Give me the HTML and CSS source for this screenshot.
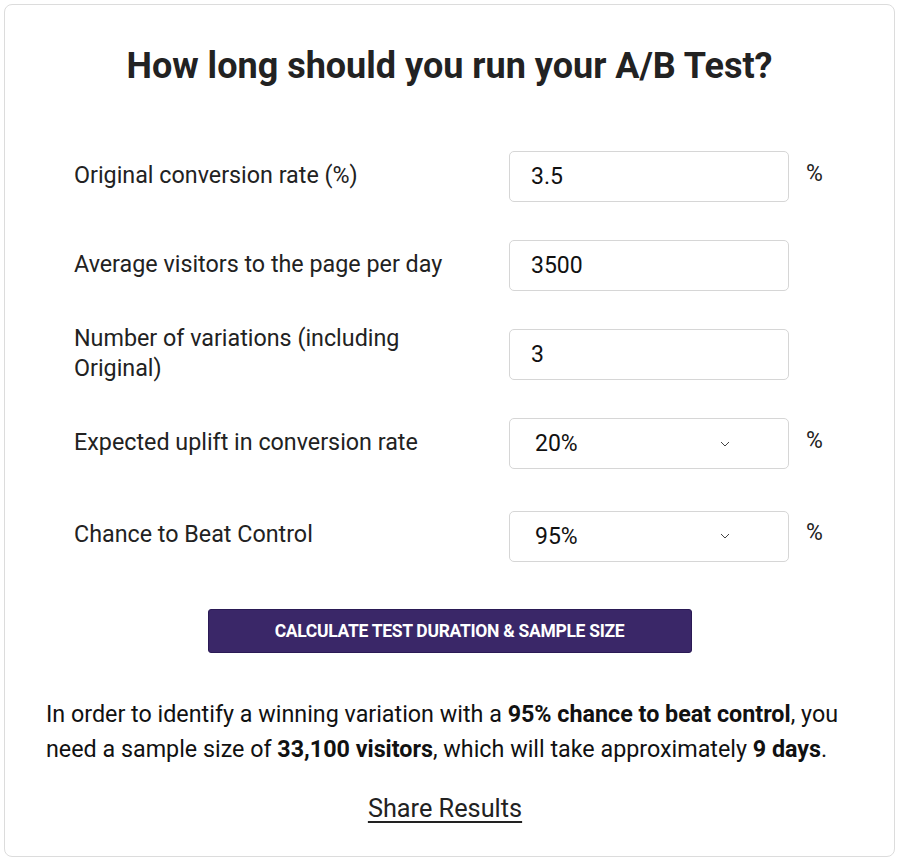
FILE: index.html
```html
<!DOCTYPE html>
<html>
<head>
<meta charset="utf-8">
<link rel="stylesheet" href="styles.css">
</head>
<body>
<div class="card">
  <h1 class="title">How long should you run your A/B Test?</h1>
  <div class="form">
    <label class="label">Original conversion rate (%)</label>
    <div class="field">3.5</div>
    <span class="unit">%</span>

    <label class="label">Average visitors to the page per day</label>
    <div class="field">3500</div>
    <span class="unit"></span>

    <label class="label">Number of variations (including Original)</label>
    <div class="field">3</div>
    <span class="unit"></span>

    <label class="label">Expected uplift in conversion rate</label>
    <div class="field select"><span>20%</span><span class="chev"><svg width="10" height="6" viewBox="0 0 10 6"><path d="M1 1 L5 5 L9 1" fill="none" stroke="#444" stroke-width="1"/></svg></span></div>
    <span class="unit">%</span>

    <label class="label last">Chance to Beat Control</label>
    <div class="field select last"><span>95%</span><span class="chev"><svg width="10" height="6" viewBox="0 0 10 6"><path d="M1 1 L5 5 L9 1" fill="none" stroke="#444" stroke-width="1"/></svg></span></div>
    <span class="unit last">%</span>
  </div>
  <div class="btn-wrap"><button class="btn">Calculate Test Duration &amp; Sample Size</button></div>
  <p class="result">In order to identify a winning variation with a <b>95% chance to beat control</b>, you need a sample size of <b>33,100 visitors</b>, which will take approximately <b>9 days</b>.</p>
  <div class="share"><a class="share-link">Share Results</a></div>
</div>
</body>
</html>
```

FILE: styles.css
```css
html, body {
  margin: 0;
  padding: 0;
  background: #fff;
}
body {
  font-family: Roboto, "Liberation Sans", sans-serif;
  color: #222;
}
.card {
  margin: 4px;
  width: 889px;
  height: 851px;
  border: 1px solid #dcdcdc;
  border-radius: 8px;
  box-sizing: content-box;
  padding: 0;
}
.title {
  margin: 37px 0 0;
  text-align: center;
  font-size: 36px;
  font-weight: 700;
  line-height: 48px;
  color: #222;
}
.form {
  display: grid;
  grid-template-columns: 418px 280px 40px;
  grid-auto-rows: 51px;
  column-gap: 17px;
  row-gap: 38px;
  margin: 61px 0 0 69px;
  align-items: center;
}
.label {
  font-size: 23.3px;
  line-height: 30px;
  padding-right: 20px;
  padding-bottom: 4px;
  color: #222;
}
.field {
  box-sizing: border-box;
  height: 51px;
  border: 1px solid #d6d6d6;
  border-radius: 5px;
  padding: 0 21px;
  font-size: 23px;
  display: flex;
  align-items: center;
  color: #111;
}
.select {
  justify-content: space-between;
  padding-left: 25px;
  padding-right: 58px;
}
.chev {
  display: flex;
  align-items: center;
}
.unit {
  font-size: 23px;
  line-height: 30px;
  padding-bottom: 6px;
}
.last {
  margin-top: 7px;
}
.btn-wrap {
  display: flex;
  justify-content: center;
  margin-top: 51px;
}
.btn {
  width: 484px;
  height: 44px;
  background: #3a2768;
  border: 1px solid #2a1a55;
  border-radius: 3px;
  color: #fff;
  font-family: Roboto, "Liberation Sans", sans-serif;
  font-weight: 700;
  font-size: 17.5px;
  text-transform: uppercase;
  letter-spacing: -0.3px;
}
.result {
  margin: 44px 41px 0 41px;
  font-size: 23.3px;
  line-height: 35px;
  color: #111;
}
.result b {
  font-weight: 700;
}
.share {
  text-align: center;
  margin-top: 27px;
  padding-right: 9px;
}
.share-link {
  font-size: 25.3px;
  color: #222;
  text-decoration: underline;
  text-underline-offset: 4px;
}
```
